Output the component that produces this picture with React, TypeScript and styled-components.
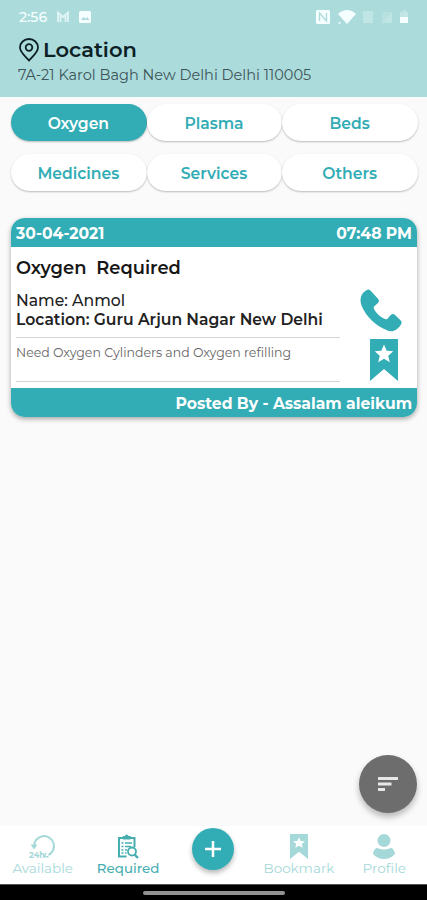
import React from "react";
import styled, { createGlobalStyle } from "styled-components";

const teal = "#32adb5";
const paleTeal = "#acdbdc";

const GlobalStyle = createGlobalStyle`
  * { box-sizing: border-box; }
  body { margin: 0; background: #fafafa; font-family: Montserrat, Inter, sans-serif; }
  svg { display: block; flex: none; }
  button { font: inherit; border: 0; padding: 0; cursor: pointer; }
`;

const Screen = styled.div`
  width: 427px;
  height: 900px;
  display: flex;
  flex-direction: column;
  overflow: hidden;
  background: #fafafa;
`;

const Header = styled.header`
  height: 97px;
  flex: none;
  background: ${paleTeal};
`;

const StatusBar = styled.div`
  height: 33px;
  padding: 0 17px 0 19px;
  display: flex;
  align-items: center;
  justify-content: space-between;
  color: #f5ffff;
`;

const StatusGroup = styled.div`
  display: flex;
  align-items: center;
  gap: 9px;
`;

const Text = styled.span<{
  $size: number;
  $weight?: number;
  $color?: string;
  $line?: number;
}>`
  display: block;
  white-space: pre;
  font-size: ${(p) => p.$size}px;
  font-weight: ${(p) => p.$weight ?? 400};
  line-height: ${(p) => p.$line ?? 18}px;
  color: ${(p) => p.$color ?? "inherit"};
`;

const LocationRow = styled.div`
  height: 33px;
  padding-left: 19px;
  display: flex;
  align-items: center;
  gap: 4px;
`;

const Address = styled.div`
  padding-left: 18px;
`;

const Filters = styled.div`
  margin: 7px 9px 0 11px;
  display: grid;
  grid-template-columns: repeat(3, 1fr);
  row-gap: 13px;
`;

const Chip = styled.button<{ $active?: boolean }>`
  height: 37px;
  padding: 3px 1px 0 0;
  border-radius: 19px;
  display: flex;
  align-items: center;
  justify-content: center;
  background: ${(p) => (p.$active ? teal : "#fff")};
  color: ${(p) => (p.$active ? "#fff" : teal)};
  box-shadow: 0 1px 2px rgba(0, 0, 0, 0.26);
`;

const Card = styled.article`
  margin: 27px 10px 0 11px;
  height: 199px;
  flex: none;
  border-radius: 14px;
  overflow: hidden;
  display: flex;
  flex-direction: column;
  background: #fff;
  box-shadow: 0 2px 5px rgba(0, 0, 0, 0.34);
`;

const CardBar = styled.div<{ $end?: boolean }>`
  height: 29px;
  flex: none;
  padding: 3px 5px 0;
  display: flex;
  align-items: center;
  justify-content: ${(p) => (p.$end ? "flex-end" : "space-between")};
  background: ${teal};
  color: #fff;
`;

const CardBody = styled.div`
  flex: 1;
  display: flex;
  justify-content: space-between;
  padding: 0 14px 0 5px;
`;

const Details = styled.div`
  width: 324px;
  padding-top: 11px;
`;

const Contact = styled.div`
  margin-top: 14px;
`;

const Note = styled.div`
  margin-top: 8px;
  height: 45px;
  padding-top: 7px;
  border-top: 1px solid #d4d4d4;
  border-bottom: 1px solid #d4d4d4;
`;

const Actions = styled.div`
  padding-top: 42px;
  display: flex;
  flex-direction: column;
  align-items: flex-end;
  gap: 7px;
  color: ${teal};
`;

const CallAction = styled.div`
  margin-right: 1px;
`;

const SaveAction = styled.div`
  margin-right: 5px;
`;

const Content = styled.main`
  flex: 1;
  display: flex;
  flex-direction: column;
  justify-content: space-between;
`;

const SortButton = styled.button`
  width: 58px;
  height: 58px;
  margin: 0 10px 13px 0;
  align-self: flex-end;
  display: grid;
  place-items: center;
  border-radius: 50%;
  background: #6d6d6d;
  box-shadow: 0 4px 6px rgba(0, 0, 0, 0.27);
`;

const Nav = styled.nav`
  height: 58px;
  flex: none;
  display: grid;
  grid-template-columns: repeat(5, 1fr);
  background: #fff;
`;

const NavItem = styled.div<{ $active?: boolean }>`
  display: flex;
  flex-direction: column;
  align-items: center;
  padding-top: 8px;
  gap: 1px;
  color: ${(p) => (p.$active ? "#46aeb1" : "#a5d8d9")};
`;

const AddButton = styled.button`
  width: 42px;
  height: 42px;
  margin-top: 2px;
  justify-self: center;
  display: grid;
  place-items: center;
  border-radius: 50%;
  background: ${teal};
  box-shadow: 0 3px 5px rgba(0, 0, 0, 0.28);
`;

const SystemBar = styled.div`
  height: 16px;
  flex: none;
  display: grid;
  place-items: center;
  background: #000;
  border-top: 1px solid #555;
`;

const HomeHandle = styled.div`
  width: 142px;
  height: 4px;
  border-radius: 2px;
  background: #929292;
`;

const BookmarkIcon = ({ width, height }: { width: number; height: number }) => (
  <svg width={width} height={height} viewBox="0 0 28 42" preserveAspectRatio="none">
    <path d="M0 0h28v42L14 30 0 42Z" fill="currentColor" />
    <path d="m14 5.500 2.700 6.200 6.600.6-5 4.400 1.500 6.600L14 19.800l-5.800 3.500 1.500-6.600-5-4.400 6.600-.6Z" fill="#fff" />
  </svg>
);

const PinIcon = () => (
  <svg width="20" height="24" viewBox="0 0 20 24" fill="none" stroke="#0b2024" strokeWidth="1.8">
    <path d="M10 22.500C7 19 1 14.500 1 9.500a9 8.500 0 0 1 18 0C19 14.500 13 19 10 22.500Z" />
    <circle cx="10" cy="9.500" r="3.300" />
  </svg>
);

const PhoneIcon = () => (
  <svg width="42" height="43" viewBox="0 0 42 43" fill="currentColor">
    <path d="M3.700 3.200L6.700 1C8.200 0 9.700.5 10.900 2L18.200 9.900C19.300 11.200 19.200 12.700 18 14L14 17.500C13.500 18.500 13.700 19.400 14.300 20.500C16.300 24.200 20.600 28.200 25 30C26.200 30.500 27 30.300 27.700 29.400L30.700 26C31.900 24.800 33.500 24.700 34.800 25.700L40.700 31.500C41.800 32.600 41.900 34 41 35.400C39 38.500 36.700 41 33.400 41.900C31.500 42.400 29.500 42.300 27.500 41.500C15.500 37 6.300 27.700 1.800 17.300C-.2 12.600-.1 7 3.700 3.200Z" />
  </svg>
);

const SortIcon = () => (
  <svg width="20" height="14" viewBox="0 0 20 14" fill="#e7e7e7">
    <path d="M0 0h20v3H0ZM0 5.500h13.500v3H0ZM0 11h7v3H0Z" />
  </svg>
);

const PlusIcon = () => (
  <svg width="16" height="16" viewBox="0 0 16 16" stroke="#fff" strokeWidth="2.500">
    <path d="M8 0v16M0 8h16" />
  </svg>
);

const HoursIcon = () => (
  <svg width="28" height="25" viewBox="0 0 28 25" fill="none" stroke="currentColor">
    <path d="M5 13.500V12a10 10 0 1 1 14.500 9" strokeWidth="2" />
    <path d="M1.500 10.500h7L5 15.500Z" fill="currentColor" stroke="none" />
    <path d="m17 19-1.500 3.500 4 .5" strokeWidth="1.300" />
    <text x="0" y="24" fontSize="8" fontWeight="700" fill="currentColor" stroke="none">24h</text>
  </svg>
);

const ClipboardIcon = () => (
  <svg width="22" height="25" viewBox="0 0 22 25" fill="none" stroke="currentColor">
    <path d="M9.500 22.500H2V4h15.500v9" strokeWidth="2" />
    <path d="M6 5V2.500h2.200a1.500 1.500 0 0 1 3 0h2.300V5Z" fill="currentColor" strokeWidth="1" />
    <path d="M4.500 9h2M8 9h7M4.500 12.500h2M8 12.500h6M4.500 16h2M8 16h2M4.500 19h2M8 19h1.500" strokeWidth="1.300" />
    <circle cx="15" cy="17.500" r="4" strokeWidth="1.800" fill="#fff" />
    <path d="m17.500 20.500 3.500 3.500" strokeWidth="2.400" />
  </svg>
);

const ProfileIcon = () => (
  <svg width="22" height="25" viewBox="0 0 22 25" fill="currentColor">
    <circle cx="11" cy="6.500" r="6.500" />
    <path d="M3.500 14C5.500 14 7 15.500 11 15.500S16.500 14 18.500 14C20.500 15 21.700 17 22 20 19 23.300 15.500 25 11 25S3 23.300 0 20C.3 17 1.500 15 3.500 14Z" />
  </svg>
);

const NotificationIcons = () => (
  <svg width="36" height="14" viewBox="0 0 36 14" fill="none" stroke="currentColor">
    <path d="M2 12V2.500l5 4.500 5-4.500V12M4.500 4v8M9.500 4v8" strokeWidth="1.800" opacity=".72" />
    <rect x="23" y="1" width="12" height="12" rx="1.500" fill="currentColor" stroke="none" />
    <path d="m25 10 2.500-3 2 2 1.500-2 2.500 3Z" fill={paleTeal} stroke="none" />
  </svg>
);

const ConnectionIcons = () => (
  <svg width="94" height="16" viewBox="0 0 94 16" fill="currentColor">
    <rect x="0" y="1" width="14" height="14" rx="1.500" />
    <path d="M3.500 12V4l7 8V4" fill="none" stroke={paleTeal} strokeWidth="1.300" />
    <path d="M22 5Q31-3 40 5L31 15Z" />
    <circle cx="23.500" cy="14" r="1" />
    <g opacity=".28">
      <rect x="47" y="2" width="10" height="12" />
      <path d="m66 14 10-11v11Z" />
      <path d="M66 3h10v11H66Z" opacity=".55" />
    </g>
    <path d="M87 1h3v2h2v11h-8V3h3Z" opacity=".3" />
    <path d="M84 8h8v5.500q0 .5-.5.500h-7q-.5 0-.5-.5Z" />
  </svg>
);

const chips = ["Oxygen", "Plasma", "Beds", "Medicines", "Services", "Others"];

export default function App() {
  return (
    <>
      <GlobalStyle />
      <Screen>
        <Header>
          <StatusBar>
            <StatusGroup>
              <Text $size={14.2} $weight={500}>2:56</Text>
              <NotificationIcons />
            </StatusGroup>
            <ConnectionIcons />
          </StatusBar>
          <LocationRow>
            <PinIcon />
            <Text $size={21} $weight={600} $color="#0b2024" $line={24}>Location</Text>
          </LocationRow>
          <Address>
            <Text $size={14.5} $color="#3d5558">7A-21 Karol Bagh New Delhi Delhi 110005</Text>
          </Address>
        </Header>
        <Content>
          <div>
            <Filters>
              {chips.map((label, i) => (
                <Chip key={label} $active={i === 0}>
                  <Text $size={15.6} $weight={600}>{label}</Text>
                </Chip>
              ))}
            </Filters>
            <Card>
              <CardBar>
                <Text $size={15.6} $weight={700}>30-04-2021</Text>
                <Text $size={15.6} $weight={700}>07:48 PM</Text>
              </CardBar>
              <CardBody>
                <Details>
                  <Text $size={17.9} $weight={600} $color="#171717" $line={20}>{"Oxygen  Required"}</Text>
                  <Contact>
                    <Text $size={15.7} $weight={500} $color="#222">Name: Anmol</Text>
                    <Text $size={15.6} $weight={600} $color="#222" $line={19}>Location: Guru Arjun Nagar New Delhi</Text>
                  </Contact>
                  <Note>
                    <Text $size={12.5} $color="#666" $line={16}>Need Oxygen Cylinders and Oxygen refilling</Text>
                  </Note>
                </Details>
                <Actions>
                  <CallAction><PhoneIcon /></CallAction>
                  <SaveAction><BookmarkIcon width={28} height={42} /></SaveAction>
                </Actions>
              </CardBody>
              <CardBar $end>
                <Text $size={15.6} $weight={700}>Posted By - Assalam aleikum</Text>
              </CardBar>
            </Card>
          </div>
          <SortButton aria-label="Sort"><SortIcon /></SortButton>
        </Content>
        <Nav>
          <NavItem>
            <HoursIcon />
            <Text $size={13.5} $line={16}>Available</Text>
          </NavItem>
          <NavItem $active>
            <ClipboardIcon />
            <Text $size={13.4} $weight={500} $line={16}>Required</Text>
          </NavItem>
          <AddButton aria-label="Add"><PlusIcon /></AddButton>
          <NavItem>
            <BookmarkIcon width={18} height={25} />
            <Text $size={13.5} $line={16}>Bookmark</Text>
          </NavItem>
          <NavItem>
            <ProfileIcon />
            <Text $size={13.7} $line={16}>Profile</Text>
          </NavItem>
        </Nav>
        <SystemBar><HomeHandle /></SystemBar>
      </Screen>
    </>
  );
}
